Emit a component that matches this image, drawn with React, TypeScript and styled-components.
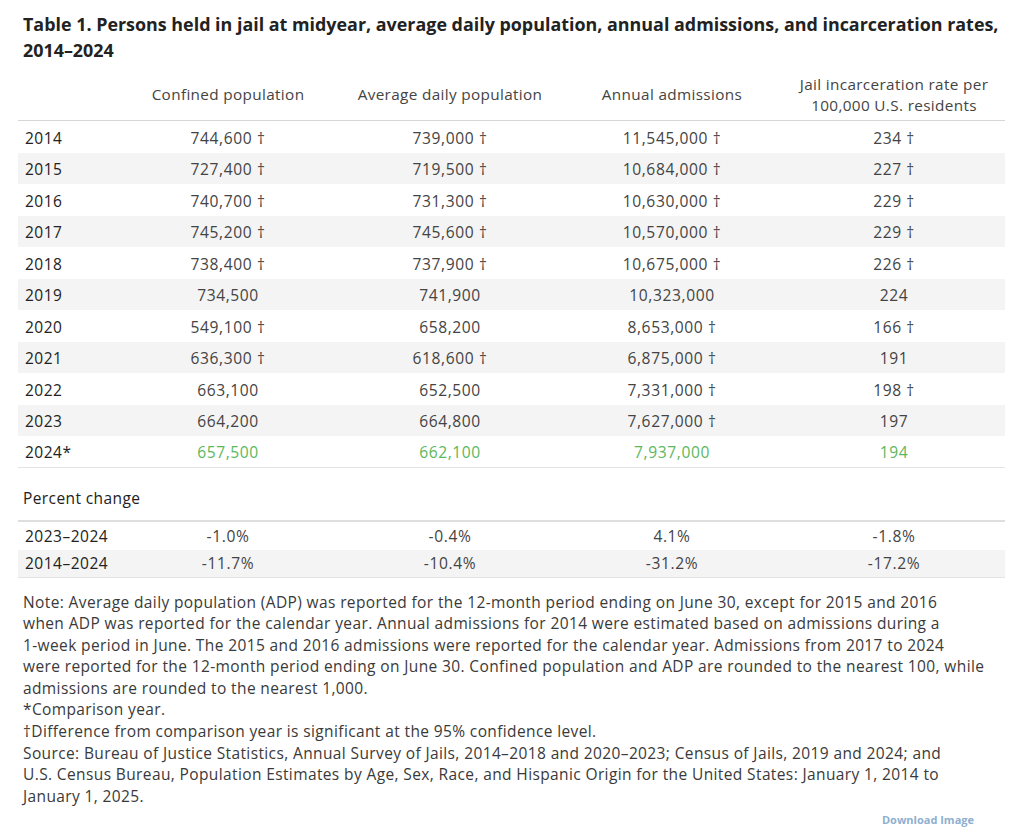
import React from 'react';
import styled, { createGlobalStyle } from 'styled-components';

const GlobalStyle = createGlobalStyle`
  html, body {
    margin: 0;
    padding: 0;
    background: #ffffff;
  }
  body {
    font-family: 'Open Sans', 'Noto Sans', sans-serif;
    color: #333333;
  }
`;

const Page = styled.div`
  width: 1024px;
  height: 840px;
  box-sizing: border-box;
  padding: 11px 19px 0 18px;
  display: flex;
  flex-direction: column;
  overflow: hidden;
`;

const Title = styled.h1`
  margin: 0;
  padding-left: 5px;
  font-size: 17.9px;
  line-height: 26px;
  font-weight: 700;
  color: #222222;
`;

const Grid = styled.div`
  display: grid;
  grid-template-columns: 99px repeat(4, 222px);
`;

const HeaderRow = styled(Grid)`
  margin-top: 6px;
  height: 51px;
  border-bottom: 1px solid #d6d6d6;
`;

const HeaderCell = styled.div`
  display: flex;
  align-items: center;
  justify-content: center;
  text-align: center;
  font-size: 15.3px;
  letter-spacing: 0.35px;
  line-height: 21px;
  color: #444444;
`;

const Row = styled(Grid)<{ $shaded?: boolean; $height: number; $last?: boolean }>`
  height: ${(p) => p.$height}px;
  align-items: center;
  padding-top: ${(p) => (p.$height > 30 ? 2 : 0)}px;
  box-sizing: border-box;
  background: ${(p) => (p.$shaded ? '#f4f4f4' : '#ffffff')};
  border-bottom: ${(p) => (p.$last ? '1px solid #e4e4e4' : 'none')};
`;

const YearCell = styled.div`
  padding-left: 7px;
  font-size: 15.5px;
  letter-spacing: 0.5px;
  color: #222222;
  white-space: nowrap;
`;

const ValueCell = styled.div<{ $green?: boolean }>`
  text-align: center;
  font-size: 15.6px;
  letter-spacing: 0.6px;
  color: ${(p) => (p.$green ? '#5cb85c' : '#444444')};
  white-space: nowrap;
`;

const SectionLabel = styled.div`
  padding: 19px 0 11px 5px;
  font-size: 15.5px;
  letter-spacing: 0.4px;
  color: #222222;
  border-bottom: 2px solid #dedede;
`;

const Notes = styled.div`
  margin-top: 14px;
  padding-left: 5px;
  font-size: 15.5px;
  letter-spacing: 0.38px;
  line-height: 21.6px;
  color: #3a3a3a;
  white-space: nowrap;
`;

const NoteLine = styled.p`
  margin: 0;
`;

const DownloadBar = styled.div`
  display: flex;
  justify-content: flex-end;
  padding-right: 31px;
  margin-top: 5px;
`;

const DownloadLink = styled.a`
  font-size: 11px;
  font-weight: 700;
  color: #8eafd0;
  text-decoration: none;
`;

const rows: { year: string; values: string[]; green?: boolean }[] = [
  { year: '2014', values: ['744,600 †', '739,000 †', '11,545,000 †', '234 †'] },
  { year: '2015', values: ['727,400 †', '719,500 †', '10,684,000 †', '227 †'] },
  { year: '2016', values: ['740,700 †', '731,300 †', '10,630,000 †', '229 †'] },
  { year: '2017', values: ['745,200 †', '745,600 †', '10,570,000 †', '229 †'] },
  { year: '2018', values: ['738,400 †', '737,900 †', '10,675,000 †', '226 †'] },
  { year: '2019', values: ['734,500', '741,900', '10,323,000', '224'] },
  { year: '2020', values: ['549,100 †', '658,200', '8,653,000 †', '166 †'] },
  { year: '2021', values: ['636,300 †', '618,600 †', '6,875,000 †', '191'] },
  { year: '2022', values: ['663,100', '652,500', '7,331,000 †', '198 †'] },
  { year: '2023', values: ['664,200', '664,800', '7,627,000 †', '197'] },
  { year: '2024*', values: ['657,500', '662,100', '7,937,000', '194'], green: true },
];

const changes = [
  { year: '2023–2024', values: ['-1.0%', '-0.4%', '4.1%', '-1.8%'] },
  { year: '2014–2024', values: ['-11.7%', '-10.4%', '-31.2%', '-17.2%'] },
];

const notes = [
  'Note: Average daily population (ADP) was reported for the 12-month period ending on June 30, except for 2015 and 2016',
  'when ADP was reported for the calendar year. Annual admissions for 2014 were estimated based on admissions during a',
  '1-week period in June. The 2015 and 2016 admissions were reported for the calendar year. Admissions from 2017 to 2024',
  'were reported for the 12-month period ending on June 30. Confined population and ADP are rounded to the nearest 100, while',
  'admissions are rounded to the nearest 1,000.',
  '*Comparison year.',
  '†Difference from comparison year is significant at the 95% confidence level.',
  'Source: Bureau of Justice Statistics, Annual Survey of Jails, 2014–2018 and 2020–2023; Census of Jails, 2019 and 2024; and',
  'U.S. Census Bureau, Population Estimates by Age, Sex, Race, and Hispanic Origin for the United States: January 1, 2014 to',
  'January 1, 2025.',
];

export default function App() {
  return (
    <>
      <GlobalStyle />
      <Page>
        <Title>
          Table 1. Persons held in jail at midyear, average daily population, annual admissions, and incarceration rates,
          <br />
          2014–2024
        </Title>

        <HeaderRow>
          <HeaderCell />
          <HeaderCell>Confined population</HeaderCell>
          <HeaderCell>Average daily population</HeaderCell>
          <HeaderCell>Annual admissions</HeaderCell>
          <HeaderCell>
            Jail incarceration rate per
            <br />
            100,000 U.S. residents
          </HeaderCell>
        </HeaderRow>

        {rows.map((r, i) => (
          <Row key={r.year} $height={31.5} $shaded={i % 2 === 1} $last={i === rows.length - 1}>
            <YearCell>{r.year}</YearCell>
            {r.values.map((v, j) => (
              <ValueCell key={j} $green={r.green}>
                {v}
              </ValueCell>
            ))}
          </Row>
        ))}

        <SectionLabel>Percent change</SectionLabel>

        {changes.map((r, i) => (
          <Row key={r.year} $height={28} $shaded={i % 2 === 1} $last={i === changes.length - 1}>
            <YearCell>{r.year}</YearCell>
            {r.values.map((v, j) => (
              <ValueCell key={j}>{v}</ValueCell>
            ))}
          </Row>
        ))}

        <Notes>
          {notes.map((n, i) => (
            <NoteLine key={i}>{n}</NoteLine>
          ))}
        </Notes>

        <DownloadBar>
          <DownloadLink href="#">Download Image</DownloadLink>
        </DownloadBar>
      </Page>
    </>
  );
}
